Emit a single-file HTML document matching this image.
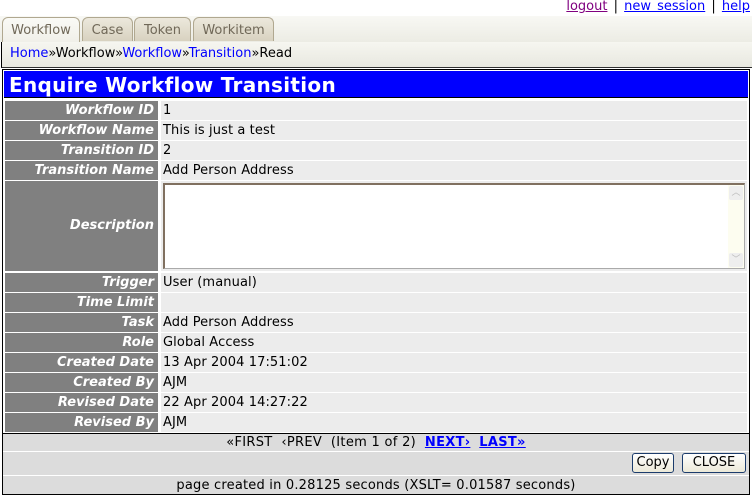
<!DOCTYPE html>
<html><head><style>
body{margin:0;width:752px;height:496px;background:#fff;font-family:"DejaVu Sans","Liberation Sans",sans-serif;font-size:13px;position:relative;overflow:hidden}
.a{position:absolute}
a{color:#00f}
.tab{position:absolute;top:17px;height:24px;border:1px solid #b0a890;border-bottom:none;border-radius:6px 6px 0 0;background:linear-gradient(#ece8dc,#d8d2c0);color:#706858;font-size:13px;text-align:center;line-height:26px;box-sizing:border-box}
.row{position:absolute;left:5px;width:742px;height:19px}
.l{position:absolute;left:0;width:153px;height:100%;background:#808080;color:#fff;font-style:italic;font-weight:bold;text-align:right;box-sizing:border-box;padding-right:4px;line-height:19px;white-space:nowrap}
.v{position:absolute;left:156px;right:0;height:100%;background:#ececec;padding-left:2px;line-height:19px;letter-spacing:0.1px}
</style></head><body>
<div class="a" style="right:2px;top:-1px;font-size:13px;word-spacing:2px"><a href="#" style="color:#800080">logout</a> | <a href="#">new session</a> | <a href="#">help</a></div>
<div class="a" style="left:0;top:16px;width:752px;height:26px;background:linear-gradient(#f8f8f4,#ecece4)"></div>
<div class="tab" style="left:2px;width:78px;height:26px;background:linear-gradient(#fafaf6,#f0efe8)">Workflow</div>
<div class="tab" style="left:82px;width:51px">Case</div>
<div class="tab" style="left:134px;width:57px">Token</div>
<div class="tab" style="left:193px;width:81px">Workitem</div>
<div class="a" style="left:80px;top:42px;width:672px;height:1px;background:#706050"></div>
<div class="a" style="left:1px;top:42px;width:751px;height:26px;border-left:1px solid #000;border-bottom:1px solid #303030;background:linear-gradient(#f6f6f0,#e8e8e0);box-sizing:border-box;padding-left:8px;line-height:24px;font-size:13px"><a href="#" style="text-decoration:none">Home</a>»Workflow»<a href="#" style="text-decoration:none">Workflow</a>»<a href="#" style="text-decoration:none">Transition</a>»Read</div>
<div class="a" style="left:2px;top:69px;width:748px;height:426px;border:1px solid #000;border-top:none;box-sizing:border-box;background:#fff"></div>
<div class="a" style="left:3px;top:69px;width:747px;height:1px;background:#000"></div>
<div class="a" style="left:4px;top:71px;width:744px;height:27px;background:#0000ff;color:#fff;font-weight:bold;font-size:20px;letter-spacing:0.3px;line-height:29px;padding-left:5px;box-sizing:border-box;border-bottom:1px solid #000">Enquire Workflow Transition</div>
<div class="row" style="top:101px"><div class="l">Workflow ID</div><div class="v">1</div></div>
<div class="row" style="top:121px"><div class="l">Workflow Name</div><div class="v">This is just a test</div></div>
<div class="row" style="top:141px"><div class="l">Transition ID</div><div class="v">2</div></div>
<div class="row" style="top:161px"><div class="l">Transition Name</div><div class="v">Add Person Address</div></div>
<div class="row" style="top:181px;height:90px"><div class="l" style="line-height:90px">Description</div><div class="v"><div class="a" style="left:2px;top:2px;right:2px;bottom:2px;background:#fff;border:1px solid #aaa;border-top:2px solid #807060;border-left:2px solid #807060"><div class="a" style="right:0;top:0;width:16px;bottom:0;background:#fdfdf0"><div class="a" style="left:1px;top:1px;width:14px;height:14px;background:#eee;border-radius:2px;color:#bbb;font-size:9px;text-align:center;line-height:14px">︿</div><div class="a" style="left:1px;bottom:1px;width:14px;height:14px;background:#eee;border-radius:2px;color:#bbb;font-size:9px;text-align:center;line-height:14px">﹀</div></div></div></div></div>
<div class="row" style="top:273px"><div class="l">Trigger</div><div class="v">User (manual)</div></div>
<div class="row" style="top:293px"><div class="l">Time Limit</div><div class="v"></div></div>
<div class="row" style="top:313px"><div class="l">Task</div><div class="v">Add Person Address</div></div>
<div class="row" style="top:333px"><div class="l">Role</div><div class="v">Global Access</div></div>
<div class="row" style="top:353px"><div class="l">Created Date</div><div class="v">13 Apr 2004 17:51:02</div></div>
<div class="row" style="top:373px"><div class="l">Created By</div><div class="v">AJM</div></div>
<div class="row" style="top:393px"><div class="l">Revised Date</div><div class="v">22 Apr 2004 14:27:22</div></div>
<div class="row" style="top:413px"><div class="l">Revised By</div><div class="v">AJM</div></div>
<div class="a" style="left:3px;top:433px;width:746px;height:1px;background:#000"></div>
<div class="a" style="left:3px;top:434px;width:746px;height:17px;background:#dcdcdc;text-align:center;line-height:18px;letter-spacing:0.3px">«FIRST &nbsp;‹PREV &nbsp;(Item 1 of 2) &nbsp;<a href="#" style="font-weight:bold">NEXT›</a> &nbsp;<a href="#" style="font-weight:bold">LAST»</a></div>
<div class="a" style="left:3px;top:452px;width:746px;height:23px;background:#dcdcdc"></div>
<div class="a" style="left:632px;top:453px;width:42px;height:20px;border:1px solid #1c3c6c;border-radius:3px;background:linear-gradient(#fff,#ece9d8);box-sizing:border-box;text-align:center;line-height:18px">Copy</div>
<div class="a" style="left:682px;top:453px;width:64px;height:20px;border:1px solid #1c3c6c;border-radius:3px;background:linear-gradient(#fff,#ece9d8);box-sizing:border-box;text-align:center;line-height:18px">CLOSE</div>
<div class="a" style="left:3px;top:476px;width:746px;height:18px;background:#dcdcdc;text-align:center;line-height:19px;letter-spacing:0.2px">page created in 0.28125 seconds (XSLT= 0.01587 seconds)</div>
</body></html>
